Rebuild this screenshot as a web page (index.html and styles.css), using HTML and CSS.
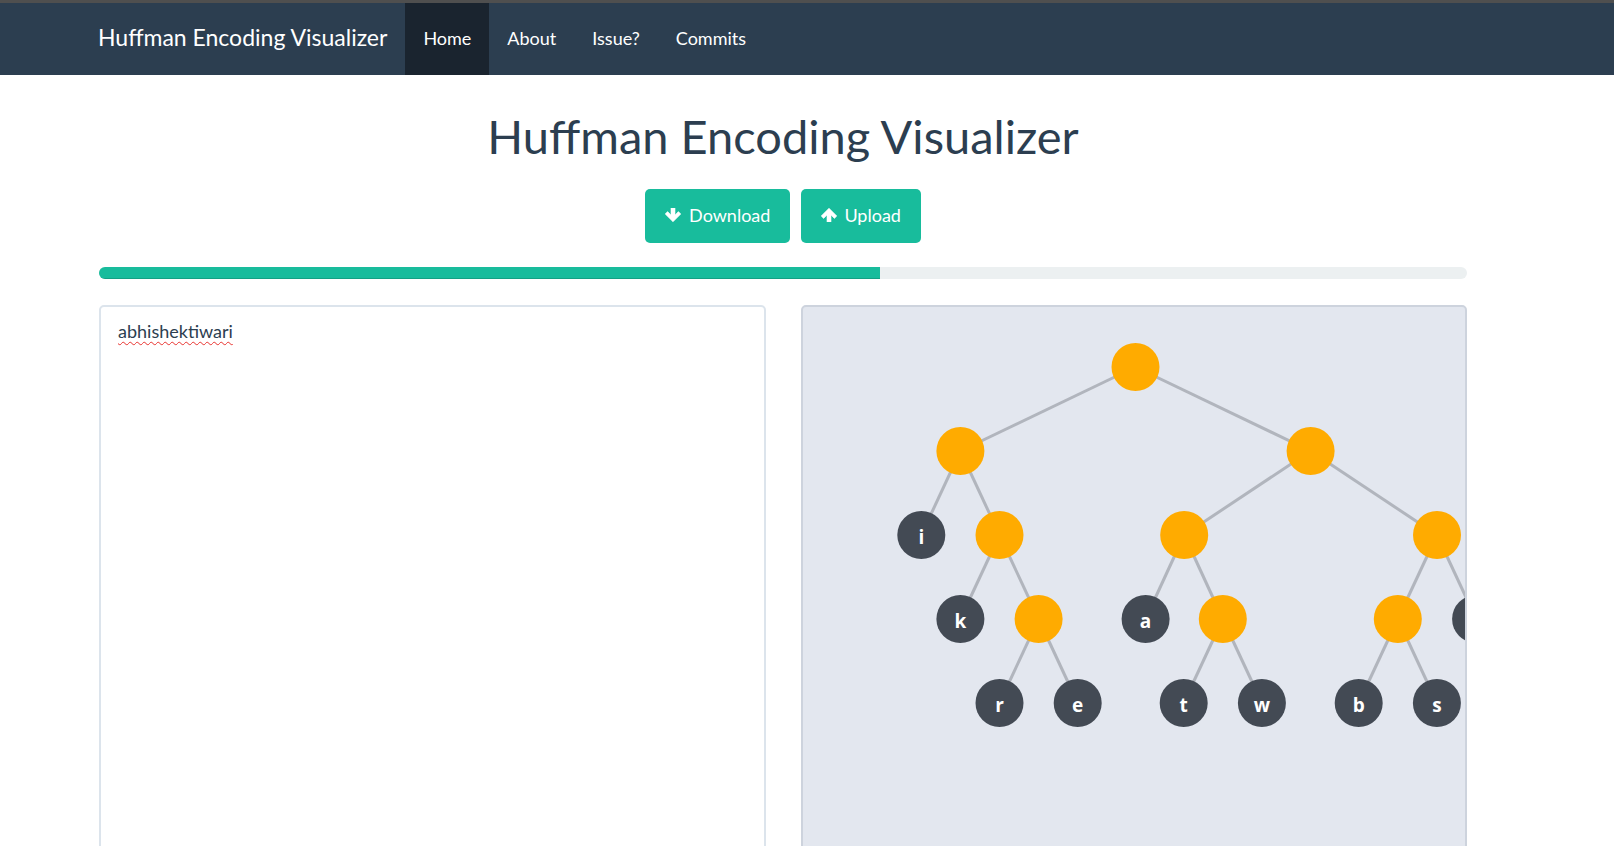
FILE: index.html
```html
<!DOCTYPE html>
<html lang="en">
<head>
<meta charset="utf-8">
<title>Huffman Encoding Visualizer</title>
<link rel="stylesheet" href="styles.css">
</head>
<body>
<div class="topline"></div>
<nav class="navbar">
  <a class="brand" href="#">Huffman Encoding Visualizer</a>
  <a class="nav-link active" href="#">Home</a>
  <a class="nav-link" href="#">About</a>
  <a class="nav-link" href="#">Issue?</a>
  <a class="nav-link" href="#">Commits</a>
</nav>
<main class="container">
  <h1 class="title">Huffman Encoding Visualizer</h1>
  <div class="actions">
    <button class="btn">
      <svg class="icon" viewBox="0 0 16 14" width="16" height="14"><path d="M6 0H10V7L13.4 3.6L15.8 6L8 13.8L0.2 6L2.6 3.6L6 7Z" fill="#fff" stroke="#fff" stroke-width="0.6" stroke-linejoin="round"/></svg>
      <span>Download</span>
    </button>
    <button class="btn btn-up">
      <svg class="icon" viewBox="0 0 16 14" width="16" height="14"><path d="M6 14H10V7L13.4 10.4L15.8 8L8 0.2L0.2 8L2.6 10.4L6 7Z" fill="#fff" stroke="#fff" stroke-width="0.6" stroke-linejoin="round"/></svg>
      <span>Upload</span>
    </button>
  </div>
  <div class="progress"><div class="progress-bar" style="width:57.1%"></div></div>
  <div class="panels">
    <div class="input"><span class="misspelled">abhishektiwari</span></div>
    <div class="tree">
      <svg width="700" height="600" viewBox="0 0 700 600">
        <g class="links">
          <line x1="332.5" y1="60" x2="157.4" y2="144"/>
          <line x1="332.5" y1="60" x2="507.6" y2="144"/>
          <line x1="157.4" y1="144" x2="118.3" y2="228"/>
          <line x1="157.4" y1="144" x2="196.5" y2="228"/>
          <line x1="507.6" y1="144" x2="381.2" y2="228"/>
          <line x1="507.6" y1="144" x2="634" y2="228"/>
          <line x1="196.5" y1="228" x2="157.4" y2="312"/>
          <line x1="196.5" y1="228" x2="235.6" y2="312"/>
          <line x1="381.2" y1="228" x2="342.6" y2="312"/>
          <line x1="381.2" y1="228" x2="419.8" y2="312"/>
          <line x1="634" y1="228" x2="594.8" y2="312"/>
          <line x1="634" y1="228" x2="673.1" y2="312"/>
          <line x1="235.6" y1="312" x2="196.5" y2="396"/>
          <line x1="235.6" y1="312" x2="274.7" y2="396"/>
          <line x1="419.8" y1="312" x2="380.7" y2="396"/>
          <line x1="419.8" y1="312" x2="458.9" y2="396"/>
          <line x1="594.8" y1="312" x2="555.7" y2="396"/>
          <line x1="594.8" y1="312" x2="633.9" y2="396"/>
        </g>
        <g class="inner">
          <circle cx="332.5" cy="60" r="24"/>
          <circle cx="157.4" cy="144" r="24"/>
          <circle cx="507.6" cy="144" r="24"/>
          <circle cx="196.5" cy="228" r="24"/>
          <circle cx="381.2" cy="228" r="24"/>
          <circle cx="634" cy="228" r="24"/>
          <circle cx="235.6" cy="312" r="24"/>
          <circle cx="419.8" cy="312" r="24"/>
          <circle cx="594.8" cy="312" r="24"/>
        </g>
        <g class="leaf">
          <circle cx="118.3" cy="228" r="24"/><text x="118.3" y="237">i</text>
          <circle cx="157.4" cy="312" r="24"/><text x="157.4" y="321">k</text>
          <circle cx="342.6" cy="312" r="24"/><text x="342.6" y="321">a</text>
          <circle cx="673.1" cy="312" r="24"/><text x="673.1" y="321">h</text>
          <circle cx="196.5" cy="396" r="24"/><text x="196.5" y="405">r</text>
          <circle cx="274.7" cy="396" r="24"/><text x="274.7" y="405">e</text>
          <circle cx="380.7" cy="396" r="24"/><text x="380.7" y="405">t</text>
          <circle cx="458.9" cy="396" r="24"/><text x="458.9" y="405">w</text>
          <circle cx="555.7" cy="396" r="24"/><text x="555.7" y="405">b</text>
          <circle cx="633.9" cy="396" r="24"/><text x="633.9" y="405">s</text>
        </g>
      </svg>
    </div>
  </div>
</main>
</body>
</html>
```
FILE: styles.css
```css
* { box-sizing: border-box; }

body {
  margin: 0;
  font-family: Lato, "Open Sans", "Liberation Sans", sans-serif;
  color: #2c3e50;
  background: #fff;
}

.topline {
  height: 3px;
  background: #4f4f4f;
}

.navbar {
  height: 72px;
  background: #2c3e50;
  display: flex;
  align-items: stretch;
  padding-left: 80px;
}

.brand {
  display: flex;
  align-items: center;
  padding: 0 18px 4px 18px;
  font-size: 23px;
  color: #fff;
  text-decoration: none;
}

.nav-link {
  display: flex;
  align-items: center;
  padding: 0 18px 2px;
  font-size: 18px;
  color: #fff;
  text-decoration: none;
}

.nav-link.active {
  background: #1a242f;
}

.container {
  width: 1368px;
  margin-left: 99px;
  padding-top: 36px;
}

.title {
  margin: 0;
  font-size: 47px;
  font-weight: 400;
  line-height: 1.1;
  text-align: center;
  color: #2c3e50;
}

.actions {
  margin-top: 26px;
  display: flex;
  justify-content: center;
  gap: 11px;
}

.btn {
  height: 54px;
  padding: 0 20px 2px;
  border: 0;
  border-radius: 5px;
  background: #18bc9c;
  color: #fff;
  font-family: Lato, "Open Sans", sans-serif;
  font-size: 18px;
  display: inline-flex;
  align-items: center;
  gap: 8px;
  cursor: pointer;
}

.btn-up {
  gap: 7px;
}

.icon {
  display: block;
  flex: none;
}

.progress {
  margin-top: 24px;
  height: 12px;
  border-radius: 6px;
  background: #ecf0f1;
  overflow: hidden;
}

.progress-bar {
  height: 100%;
  background: #18bc9c;
  box-shadow: inset 0 -1px 0 rgba(0, 0, 0, 0.15);
}

.panels {
  margin-top: 26px;
  display: grid;
  grid-template-columns: 667px 666px;
  gap: 35px;
}

.input {
  height: 620px;
  border: 2px solid #dce4ec;
  border-radius: 5px;
  padding: 12px 17px;
  font-size: 18px;
  line-height: 1.42857;
  color: #2c3e50;
}

.misspelled {
  text-decoration: underline wavy #e8322e;
  text-decoration-thickness: 1px;
  text-underline-offset: 3px;
}

.tree {
  height: 620px;
  background: #e3e7ef;
  border: 2px solid #cdd3dd;
  border-radius: 5px;
  overflow: hidden;
}

.tree svg {
  display: block;
}

.links line {
  stroke: #b1b5bd;
  stroke-width: 3;
}

.inner circle {
  fill: #ffab00;
}

.leaf circle {
  fill: #434a54;
}

.leaf text {
  fill: #fff;
  font-family: "Open Sans", "Liberation Sans", sans-serif;
  font-weight: 700;
  font-size: 19px;
  text-anchor: middle;
}
```
